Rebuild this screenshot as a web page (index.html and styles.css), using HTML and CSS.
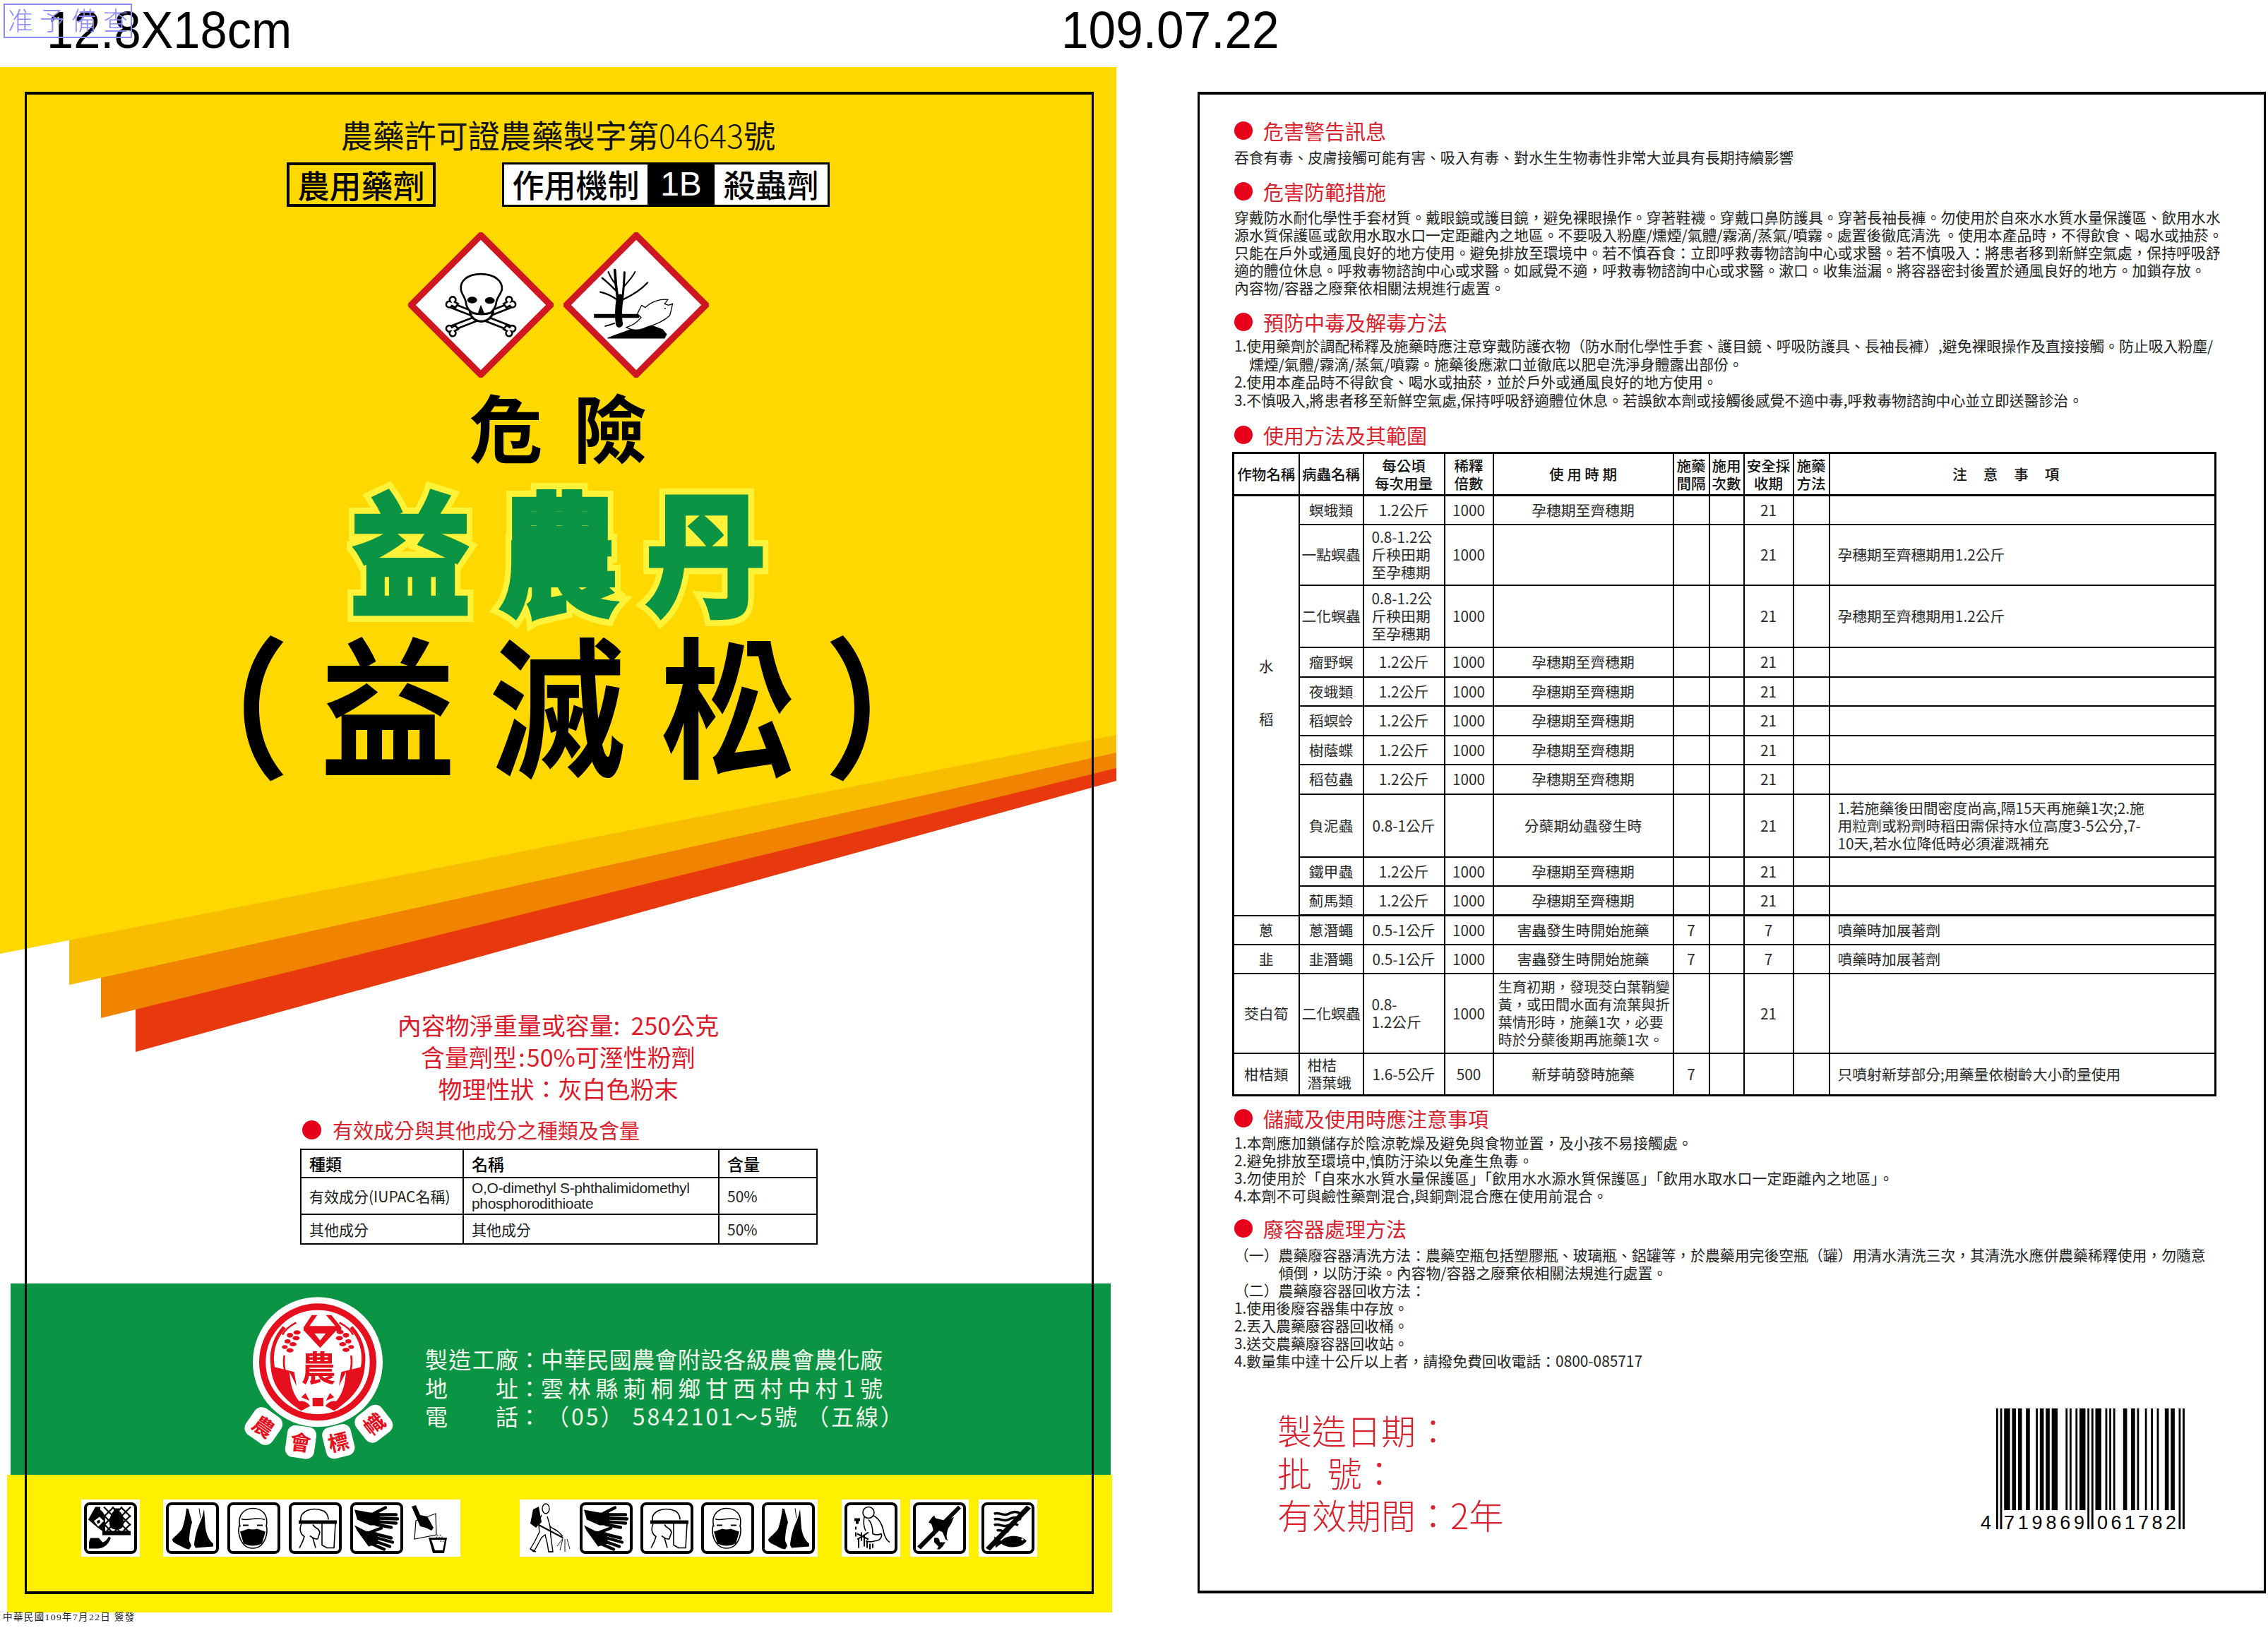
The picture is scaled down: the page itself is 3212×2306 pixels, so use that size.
FILE: index.html
```html
<!DOCTYPE html>
<html lang="zh-Hant">
<head>
<meta charset="utf-8">
<title>益農丹 標示</title>
<link rel="stylesheet" href="styles.css">
</head>
<body>
<svg class="defs" aria-hidden="true">
  <symbol id="i-boots" viewBox="0 0 67 64">
    <path d="M25 4C24 14 22 24 19 33C14 40 8 44 5 48C5 52 10 54 14 56C20 59 25 62 29 62L32 57L29 50C29 40 31 30 33 24C31 16 29 10 28 5Z"/>
    <path d="M48 14L50 5L52 32C54 44 58 50 63 54L63 58L38 60L36 56C37 44 40 34 43 27C45 22 47 18 48 14Z"/>
    <path d="M43 4L45 18" fill="none" stroke="#000" stroke-width="1"/>
  </symbol>
  <symbol id="i-mask" viewBox="0 0 67 64">
    <g fill="none" stroke="#000" stroke-width="1.6">
      <path d="M14 30C9 12 22 4 32 4C44 4 55 12 51 30"/>
      <path d="M13 28C10 38 14 50 20 56C26 62 38 62 44 56C50 50 54 38 51 28"/>
      <path d="M16 19C24 23 36 15 49 20"/>
    </g>
    <path d="M18 27h8v2h-8zM38 27h8v2h-8z"/>
    <path d="M14 37L26 33Q32 35 38 33L50 37L45 54Q32 60 19 54Z"/>
  </symbol>
  <symbol id="i-shield" viewBox="0 0 67 64">
    <g fill="none" stroke="#000" stroke-width="1.6">
      <path d="M13 22C11 7 30 1 46 8C50 11 52 15 52 20"/>
      <path d="M14 26C10 34 13 41 18 44C16 52 13 56 11 60"/>
      <path d="M43 25V56L50 60H60L62 25"/>
      <path d="M30 27C34 34 38 30 40 38L37 47C33 49 29 45 26 43"/>
      <path d="M30 46L34 60"/>
    </g>
    <path d="M10 21H64V26H10Z"/>
  </symbol>
  <symbol id="i-gloves" viewBox="0 0 67 64">
    <path d="M2 6L24 10L38 10L38 28L24 28L6 20Z"/>
    <path d="M2 28L18 36L34 38L36 54L22 58L6 36Z"/>
    <g fill="none" stroke="#000" stroke-width="4.4" stroke-linecap="round">
      <path d="M36 13L61 13M36 18L63 19M36 23L61 25M33 27L54 31M30 11L46 3"/>
      <path d="M34 41L54 46M34 46L56 52M32 51L52 58M28 55L44 62M24 38L40 32"/>
    </g>
  </symbol>
</svg>

<div class="page">
  <header class="topline">
    <div class="size-mark">12.8X18cm</div>
    <div class="date-mark">109.07.22</div>
  </header>
  <div class="stamp">准予備查</div>

  <div class="sheets">
    <section class="front">
      <svg class="front-bg" viewBox="0 0 1581 2189" aria-hidden="true">
        <polygon fill="#E8380D" points="192,1395 1581,1011 1581,800 192,800"/>
        <polygon fill="#F08300" points="143,1347 1581,993 1581,800 143,800"/>
        <polygon fill="#F8BC00" points="98,1300 1581,971 1581,800 98,800"/>
        <polygon fill="#FFD800" points="0,0 1581,0 1581,946 0,1256"/>
      </svg>
      <div class="front-main">
        <div class="permit">農藥許可證農藥製字第<span class="permit-no">04643</span>號</div>
        <div class="tags">
          <div class="tag-use">農用藥劑</div>
          <div class="tag-moa">
            <span class="moa-a">作用機制</span><span class="moa-b">1B</span><span class="moa-c">殺蟲劑</span>
          </div>
        </div>
        <div class="ghs">
          <svg class="ghs-icon" viewBox="57 57 620 620" aria-label="toxic">
            <polygon points="367,70 664,367 367,664 70,367" fill="#fff" stroke="#CF1722" stroke-width="28"/>
            <g stroke-linecap="round" fill="none">
              <path d="M245 370L490 465M490 370L245 465" stroke="#000" stroke-width="28"/>
              <path d="M245 370L490 465M490 370L245 465" stroke="#fff" stroke-width="12"/>
            </g>
            <g fill="#fff" stroke="#000" stroke-width="8">
              <path d="M236 352a13 13 0 1 1 20 2l14 8-12 16-14-8a13 13 0 1 1-8-18z"/>
              <path d="M498 352a13 13 0 1 0-20 2l-14 8 12 16 14-8a13 13 0 1 0 8-18z"/>
              <path d="M236 480a13 13 0 1 0 20-2l14-8-12-16-14 8a13 13 0 1 0-8 18z"/>
              <path d="M498 480a13 13 0 1 1-20-2l-14-8 12-16 14 8a13 13 0 1 1 8 18z"/>
              <path d="M367 235C310 235 278 265 282 300C283 320 302 335 304 360C306 385 325 395 335 410L400 410C412 395 430 385 432 360C434 335 453 320 457 300C460 265 425 235 367 235Z"/>
              <path d="M320 392C325 452 412 452 420 392C410 410 330 410 320 392Z" stroke-width="10"/>
            </g>
            <ellipse cx="330" cy="346" rx="21" ry="14"/>
            <ellipse cx="405" cy="348" rx="21" ry="14"/>
            <path d="M367 366L354 402H382Z"/>
          </svg>
          <svg class="ghs-icon" viewBox="717 57 620 620" aria-label="environment">
            <polygon points="1027,70 1324,367 1027,664 730,367" fill="#fff" stroke="#CF1722" stroke-width="28"/>
            <g fill="none" stroke="#000" stroke-linecap="round">
              <path d="M955 448C950 420 950 385 958 335" stroke-width="30"/>
              <path d="M948 340C942 300 938 260 936 218" stroke-width="11"/>
              <path d="M945 310C925 290 905 270 882 252" stroke-width="7"/>
              <path d="M908 226C918 250 930 268 940 280" stroke-width="6"/>
              <path d="M946 345C925 330 900 318 874 312" stroke-width="7"/>
              <path d="M968 345C972 310 976 270 977 228" stroke-width="9"/>
              <path d="M974 290C990 270 1010 250 1022 226" stroke-width="6"/>
              <path d="M968 345C1000 330 1045 305 1075 272" stroke-width="7"/>
              <path d="M935 445C920 450 905 455 895 457" stroke-width="6"/>
            </g>
            <path d="M847 405H1040V422H847Z"/>
            <path d="M905 506C950 490 1000 470 1030 460L1060 452L1100 456L1140 470L1158 492L1148 510H905Z"/>
            <path d="M1032 405L1050 368L1066 378C1090 352 1130 340 1162 344L1148 362L1165 368L1182 362C1178 380 1176 392 1170 412C1140 440 1095 455 1070 462C1040 478 1010 476 985 462C1010 455 1032 440 1048 420Z" fill="#fff" stroke="#000" stroke-width="4"/>
            <circle cx="1150" cy="382" r="3"/>
          </svg>
        </div>
        <div class="danger">危險</div>
        <div class="brand"><span class="brand-text" data-t="益農丹">益農丹</span></div>
        <div class="actives">
          <span>&#xFF08;</span><span>益</span><span>滅</span><span>松</span><span>&#xFF09;</span>
        </div>
        <div class="spec">
          <div>內容物淨重量或容量:&nbsp;&nbsp;250公克</div>
          <div>含量劑型&#8202;:&#8202;50%可溼性粉劑</div>
          <div>物理性狀&#xFF1A;灰白色粉末</div>
        </div>
        <div class="comp">
          <h3 class="comp-head"><span class="dot"></span>有效成分與其他成分之種類及含量</h3>
          <table class="comp-table">
            <colgroup><col class="cc1"><col class="cc2"><col class="cc3"></colgroup>
            <tr class="cr1"><th>種類</th><th>名稱</th><th>含量</th></tr>
            <tr class="cr2"><td>有效成分(IUPAC名稱)</td><td class="latin">O,O-dimethyl S-phthalimidomethyl<br>phosphorodithioate</td><td>50%</td></tr>
            <tr class="cr3"><td>其他成分</td><td>其他成分</td><td>50%</td></tr>
          </table>
        </div>
      </div>

      <div class="maker">
        <svg class="emblem" viewBox="0 0 840 780" role="img" aria-label="農會標幟">
          <circle cx="390" cy="328" r="276" fill="#fff"/>
          <circle cx="390" cy="328" r="235" fill="none" stroke="#E60F1E" stroke-width="28"/>
          <g fill="none" stroke="#E60F1E">
            <path d="M248 180A200 200 0 0 0 270 470" stroke-width="16"/>
            <path d="M532 180A200 200 0 0 1 510 470" stroke-width="16"/>
            <path d="M248 300A170 170 0 0 0 255 380" stroke-width="8"/>
            <path d="M532 300A170 170 0 0 1 525 380" stroke-width="8"/>
            <path d="M298 160C270 175 250 190 240 212M482 160C510 175 530 190 540 212" stroke-width="8"/>
          </g>
          <path fill="#E60F1E" d="M190 345C195 420 230 475 320 535L340 525C290 480 275 440 270 370L300 430L290 370Z"/>
          <path fill="#E60F1E" d="M590 345C585 420 550 475 460 535L440 525C490 480 505 440 510 370L480 430L490 370Z"/>
          <path fill="#E60F1E" d="M365 128H388L355 175H465L425 128H448L490 180V196H467L400 268L333 196H330V180Z"/>
          <path fill="#fff" d="M376 206H424L400 236Z"/>
          <g fill="#E60F1E">
            <ellipse cx="302" cy="202" rx="15" ry="9"/><ellipse cx="272" cy="214" rx="13" ry="10"/>
            <ellipse cx="298" cy="226" rx="15" ry="9"/><ellipse cx="262" cy="240" rx="13" ry="9"/>
            <ellipse cx="285" cy="252" rx="15" ry="9"/><ellipse cx="250" cy="264" rx="12" ry="8"/>
            <ellipse cx="272" cy="278" rx="15" ry="9"/>
            <ellipse cx="485" cy="200" rx="15" ry="9"/><ellipse cx="510" cy="214" rx="13" ry="10"/>
            <ellipse cx="482" cy="226" rx="15" ry="9"/><ellipse cx="520" cy="240" rx="13" ry="9"/>
            <ellipse cx="496" cy="252" rx="15" ry="9"/><ellipse cx="532" cy="264" rx="12" ry="8"/>
            <ellipse cx="510" cy="276" rx="15" ry="9"/>
            <path d="M368 480H414V516H368Z"/>
            <path d="M308 495C325 490 345 495 358 515C340 525 320 530 305 527Z"/>
            <path d="M472 495C455 490 435 495 422 515C440 525 460 530 475 527Z"/>
            <path d="M320 478L338 460L355 492Z"/><path d="M460 478L442 460L425 492Z"/>
          </g>
          <text class="emb-main" x="393" y="408">農</text>
          <g fill="#fff">
            <rect x="-68" y="-68" width="136" height="136" rx="36" transform="translate(160 600) rotate(35)"/>
            <rect x="-62" y="-68" width="124" height="136" rx="34" transform="translate(318 668) rotate(8)"/>
            <rect x="-62" y="-68" width="124" height="136" rx="34" transform="translate(478 665) rotate(-14)"/>
            <rect x="-68" y="-68" width="136" height="136" rx="36" transform="translate(628 590) rotate(-38)"/>
          </g>
          <g class="emb-small">
            <text transform="translate(140 630) rotate(35)">農</text>
            <text transform="translate(312 702) rotate(8)">會</text>
            <text transform="translate(486 700) rotate(-14)">標</text>
            <text transform="translate(650 618) rotate(-38)">幟</text>
          </g>
        </svg>
        <div class="address">
          <div class="addr-k">製造工廠</div><div class="addr-c">&#xFF1A;</div><div class="addr-v">中華民國農會附設各級農會農化廠</div>
          <div class="addr-k">地址</div><div class="addr-c">&#xFF1A;</div><div class="addr-v">雲林縣莿桐鄉甘西村中村1號</div>
          <div class="addr-k">電話</div><div class="addr-c">&#xFF1A;</div><div class="addr-v addr-tel">&#xFF08;05&#xFF09; 5842101&#xFF5E;5號 &#xFF08;五線&#xFF09;</div>
        </div>
      </div>

      <div class="pic-band">
        <div class="strip strip-a">
          <svg class="pic" viewBox="0 0 67 64">
            <g fill="none" stroke="#000" stroke-width="2.2">
              <path d="M24 2L60 38M36 2L62 28M48 2L62 16M24 14L48 38M24 26L36 38M62 2L28 36M50 2L24 28M38 2L24 16M62 14L38 38M62 26L50 38"/>
            </g>
            <path d="M12 2H19V6C24 10 26 14 26 20V36H62V42H22V36L16 32L2 20Z"/>
            <path d="M10 22L18 16L24 22L16 30Z" fill="#fff"/>
            <path d="M14 22L18 20L19 24L15 26Z"/>
            <path d="M38 4H46V8C51 12 52 18 52 24C52 30 50 34 42 34C34 34 32 30 32 24C32 18 34 12 38 8Z"/>
            <path d="M5 46H17L22 52C24 52 28 50 31 44L34 46C30 56 24 60 16 61H3V52Z"/>
          </svg>
        </div>
        <div class="strip strip-b">
          <svg class="pic"><use href="#i-boots"/></svg>
          <svg class="pic"><use href="#i-mask"/></svg>
          <svg class="pic"><use href="#i-shield"/></svg>
          <svg class="pic"><use href="#i-gloves"/></svg>
          <svg class="free-pour" viewBox="0 0 63 73">
            <path d="M8 26L36 16L37 46L6 52Z" fill="none" stroke="#000" stroke-width="1.2"/>
            <path d="M2 6L8 4L14 18L24 20L33 36L30 40L22 36L14 34Z"/>
            <path d="M34 46L44 56M38 46L47 56M42 46L50 56" stroke="#555" stroke-width="1.6" stroke-dasharray="2 2" fill="none"/>
            <path d="M26 56H52L48 78H32Z M30 59L35 74H46L49 59Z" fill-rule="evenodd" transform="translate(0 -6)"/>
          </svg>
        </div>
        <div class="strip strip-c">
          <svg class="free-spray" viewBox="0 0 65 73">
            <path d="M10 10L18 6L22 28L14 36L6 30Z"/>
            <g fill="none" stroke="#000" stroke-width="1.4">
              <ellipse cx="28" cy="9" rx="5" ry="7"/>
              <path d="M22 18C18 26 18 36 19 42L12 56L6 66L11 70L22 50L27 46L30 58L32 70L38 70L35 48L34 34C38 38 42 38 46 42L52 48"/>
              <path d="M30 20C32 26 33 30 34 34"/>
              <path d="M6 66L14 70M32 70H38"/>
              <path d="M18 32L52 50" stroke-width="2"/>
              <path d="M52 52L48 68M55 52L55 70M58 52L62 66M53 50L44 62" stroke-width=".9"/>
            </g>
          </svg>
          <svg class="pic"><use href="#i-gloves"/></svg>
          <svg class="pic"><use href="#i-shield"/></svg>
          <svg class="pic"><use href="#i-mask"/></svg>
          <svg class="pic"><use href="#i-boots"/></svg>
        </div>
        <div class="strip strip-d">
          <svg class="pic" viewBox="0 0 67 64">
            <g fill="none" stroke="#000" stroke-width="1.6">
              <ellipse cx="30" cy="10" rx="8" ry="8"/>
              <path d="M24 16C22 26 24 32 26 36M36 14C46 18 50 28 52 40C54 46 56 50 60 52"/>
              <path d="M30 20C34 24 36 30 36 40C40 42 44 42 48 40C50 44 46 50 40 50C34 52 30 52 26 50"/>
            </g>
            <path d="M10 18H18V22H16V26H12V22H10Z"/>
            <path d="M12 30V34M12 38V44M20 38V50M24 42V58M16 46V60M28 50V60M32 54V62M36 54V60M14 40L30 48M14 48L30 38" fill="none" stroke="#000" stroke-width="2"/>
          </svg>
        </div>
        <div class="strip strip-e">
          <svg class="pic" viewBox="0 0 67 64">
            <path d="M22 18L26 14L28 18L44 22L54 16L50 26L46 32C44 38 42 46 46 50L42 48L38 38L30 34L26 44L24 32L22 26L18 24Z"/>
            <path d="M26 46C32 44 34 48 34 52L42 52L38 58L34 62H30L32 58L26 52Z"/>
            <path d="M2 58L7 62L64 4L60 0Z"/>
          </svg>
        </div>
        <div class="strip strip-f">
          <svg class="pic" viewBox="0 0 67 64">
            <path d="M14 12C20 8 26 16 34 12S46 8 52 12M14 20C20 16 26 24 34 20S46 16 52 20M14 28C20 24 26 32 34 28S44 26 48 28M18 36C22 32 28 40 34 36" fill="none" stroke="#000" stroke-width="3.4"/>
            <path d="M14 44L24 50C30 42 50 40 60 50C54 60 34 62 24 54L16 60Z"/>
            <circle cx="54" cy="48" r="1.6" fill="#fff"/>
            <path d="M2 60L8 64L66 4L60 0Z"/>
          </svg>
        </div>
      </div>
      <div class="front-frame"></div>
    </section>

    <section class="back">
      <h3 class="sec"><span class="dot"></span>危害警告訊息</h3>
      <div class="txt txt-a">
        <div>吞食有毒、皮膚接觸可能有害、吸入有毒、對水生生物毒性非常大並具有長期持續影響</div>
      </div>
      <h3 class="sec sec-2"><span class="dot"></span>危害防範措施</h3>
      <div class="txt txt-b">
        <div>穿戴防水耐化學性手套材質。戴眼鏡或護目鏡&#xFF0C;避免裸眼操作。穿著鞋襪。穿戴口鼻防護具。穿著長袖長褲。勿使用於自來水水質水量保護區、飲用水水</div>
        <div>源水質保護區或飲用水取水口一定距離內之地區。不要吸入粉塵/燻煙/氣體/霧滴/蒸氣/噴霧。處置後徹底清洗 。使用本產品時&#xFF0C;不得飲食、喝水或抽菸。</div>
        <div>只能在戶外或通風良好的地方使用。避免排放至環境中。若不慎吞食&#xFF1A;立即呼救毒物諮詢中心或求醫。若不慎吸入&#xFF1A;將患者移到新鮮空氣處&#xFF0C;保持呼吸舒</div>
        <div>適的體位休息。呼救毒物諮詢中心或求醫。如感覺不適&#xFF0C;呼救毒物諮詢中心或求醫。漱口。收集溢漏。將容器密封後置於通風良好的地方。加鎖存放。</div>
        <div>內容物/容器之廢棄依相關法規進行處置。</div>
      </div>
      <h3 class="sec sec-3"><span class="dot"></span>預防中毒及解毒方法</h3>
      <div class="txt txt-c">
        <div>1.使用藥劑於調配稀釋及施藥時應注意穿戴防護衣物&#xFF08;防水耐化學性手套、護目鏡、呼吸防護具、長袖長褲&#xFF09;,避免裸眼操作及直接接觸。防止吸入粉塵/</div>
        <div class="ind">燻煙/氣體/霧滴/蒸氣/噴霧。施藥後應漱口並徹底以肥皂洗淨身體露出部份。</div>
        <div>2.使用本產品時不得飲食、喝水或抽菸&#xFF0C;並於戶外或通風良好的地方使用。</div>
        <div>3.不慎吸入,將患者移至新鮮空氣處,保持呼吸舒適體位休息。若誤飲本劑或接觸後感覺不適中毒,呼救毒物諮詢中心並立即送醫診治。</div>
      </div>
      <h3 class="sec sec-4"><span class="dot"></span>使用方法及其範圍</h3>

      <table class="usage">
        <colgroup>
          <col class="u1"><col class="u2"><col class="u3"><col class="u4"><col class="u5">
          <col class="u6"><col class="u7"><col class="u8"><col class="u9"><col class="u10">
        </colgroup>
        <tr class="h60 head"><th>作物名稱</th><th>病蟲名稱</th><th>每公頃<br>每次用量</th><th>稀釋<br>倍數</th><th>使 用 時 期</th><th>施藥<br>間隔</th><th>施用<br>次數</th><th>安全採<br>收期</th><th>施藥<br>方法</th><th class="wide">注&nbsp;&nbsp;&nbsp;&nbsp;&nbsp;意&nbsp;&nbsp;&nbsp;&nbsp;&nbsp;事&nbsp;&nbsp;&nbsp;&nbsp;&nbsp;項</th></tr>
        <tr class="h41"><td rowspan="11" class="crop-rice"><div>水</div><div>稻</div></td><td>螟蛾類</td><td>1.2公斤</td><td>1000</td><td>孕穗期至齊穗期</td><td></td><td></td><td>21</td><td></td><td></td></tr>
        <tr class="h86"><td>一點螟蟲</td><td class="lf">0.8-1.2公<br>斤秧田期<br>至孕穗期</td><td>1000</td><td></td><td></td><td></td><td>21</td><td></td><td class="lf">孕穗期至齊穗期用1.2公斤</td></tr>
        <tr class="h88"><td>二化螟蟲</td><td class="lf">0.8-1.2公<br>斤秧田期<br>至孕穗期</td><td>1000</td><td></td><td></td><td></td><td>21</td><td></td><td class="lf">孕穗期至齊穗期用1.2公斤</td></tr>
        <tr class="h42"><td>瘤野螟</td><td>1.2公斤</td><td>1000</td><td>孕穗期至齊穗期</td><td></td><td></td><td>21</td><td></td><td></td></tr>
        <tr class="h41"><td>夜蛾類</td><td>1.2公斤</td><td>1000</td><td>孕穗期至齊穗期</td><td></td><td></td><td>21</td><td></td><td></td></tr>
        <tr class="h42"><td>稻螟蛉</td><td>1.2公斤</td><td>1000</td><td>孕穗期至齊穗期</td><td></td><td></td><td>21</td><td></td><td></td></tr>
        <tr class="h41"><td>樹蔭蝶</td><td>1.2公斤</td><td>1000</td><td>孕穗期至齊穗期</td><td></td><td></td><td>21</td><td></td><td></td></tr>
        <tr class="h42"><td>稻苞蟲</td><td>1.2公斤</td><td>1000</td><td>孕穗期至齊穗期</td><td></td><td></td><td>21</td><td></td><td></td></tr>
        <tr class="h89"><td>負泥蟲</td><td>0.8-1公斤</td><td></td><td>分蘗期幼蟲發生時</td><td></td><td></td><td>21</td><td></td><td class="lf">1.若施藥後田間密度尚高,隔15天再施藥1次;2.施<br>用粒劑或粉劑時稻田需保持水位高度3-5公分,7-<br>10天,若水位降低時必須灌溉補充</td></tr>
        <tr class="h41"><td>鐵甲蟲</td><td>1.2公斤</td><td>1000</td><td>孕穗期至齊穗期</td><td></td><td></td><td>21</td><td></td><td></td></tr>
        <tr class="h42 thick"><td>薊馬類</td><td>1.2公斤</td><td>1000</td><td>孕穗期至齊穗期</td><td></td><td></td><td>21</td><td></td><td></td></tr>
        <tr class="h41"><td>蔥</td><td>蔥潛蠅</td><td>0.5-1公斤</td><td>1000</td><td>害蟲發生時開始施藥</td><td>7</td><td></td><td>7</td><td></td><td class="lf">噴藥時加展著劑</td></tr>
        <tr class="h41"><td>韭</td><td>韭潛蠅</td><td>0.5-1公斤</td><td>1000</td><td>害蟲發生時開始施藥</td><td>7</td><td></td><td>7</td><td></td><td class="lf">噴藥時加展著劑</td></tr>
        <tr class="h113"><td>茭白筍</td><td>二化螟蟲</td><td class="lf">0.8-<br>1.2公斤</td><td>1000</td><td class="lf tight">生育初期&#xFF0C;發現茭白葉鞘變<br>黃&#xFF0C;或田間水面有流葉與折<br>葉情形時&#xFF0C;施藥1次&#xFF0C;必要<br>時於分蘗後期再施藥1次。</td><td></td><td></td><td>21</td><td></td><td></td></tr>
        <tr class="h60"><td>柑桔類</td><td class="lf">柑桔<br>潛葉蛾</td><td>1.6-5公斤</td><td>500</td><td>新芽萌發時施藥</td><td>7</td><td></td><td></td><td></td><td class="lf">只噴射新芽部分;用藥量依樹齡大小酌量使用</td></tr>
      </table>

      <h3 class="sec sec-5"><span class="dot"></span>儲藏及使用時應注意事項</h3>
      <div class="txt txt-d">
        <div>1.本劑應加鎖儲存於陰涼乾燥及避免與食物並置&#xFF0C;及小孩不易接觸處。</div>
        <div>2.避免排放至環境中,慎防汙染以免產生魚毒。</div>
        <div>3.勿使用於「自來水水質水量保護區」「飲用水水源水質保護區」「飲用水取水口一定距離內之地區」。</div>
        <div>4.本劑不可與鹼性藥劑混合,與銅劑混合應在使用前混合。</div>
      </div>
      <h3 class="sec sec-6"><span class="dot"></span>廢容器處理方法</h3>
      <div class="txt txt-e">
        <div>&#xFF08;一&#xFF09;農藥廢容器清洗方法&#xFF1A;農藥空瓶包括塑膠瓶、玻璃瓶、鋁罐等&#xFF0C;於農藥用完後空瓶&#xFF08;罐&#xFF09;用清水清洗三次&#xFF0C;其清洗水應併農藥稀釋使用&#xFF0C;勿隨意</div>
        <div class="ind-b">傾倒&#xFF0C;以防汙染。內容物/容器之廢棄依相關法規進行處置。</div>
        <div>&#xFF08;二&#xFF09;農藥廢容器回收方法&#xFF1A;</div>
        <div>1.使用後廢容器集中存放。</div>
        <div>2.丟入農藥廢容器回收桶。</div>
        <div>3.送交農藥廢容器回收站。</div>
        <div>4.數量集中達十公斤以上者&#xFF0C;請撥免費回收電話&#xFF1A;0800-085717</div>
      </div>
      <div class="foot">
        <div class="lot">
          <div>製造日期&#xFF1A;</div>
          <div>批 &nbsp;號&#xFF1A;</div>
          <div>有效期間&#xFF1A;2年</div>
        </div>
        <svg class="barcode" viewBox="0 0 289 177" role="img" aria-label="4719869061782">
          <g transform="translate(22 0) scale(2.81 1)">
            <path d="M0 0h1v171h-1zM2 0h1v171h-1zM4 0h3v144h-3zM8 0h2v144h-2zM11 0h2v144h-2zM15 0h2v144h-2zM20 0h1v144h-1zM22 0h2v144h-2zM25 0h2v144h-2zM28 0h3v144h-3zM35 0h1v144h-1zM37 0h1v144h-1zM40 0h1v144h-1zM42 0h3v144h-3zM46 0h1v171h-1zM48 0h1v171h-1zM50 0h3v144h-3zM55 0h1v144h-1zM57 0h1v144h-1zM59 0h1v144h-1zM64 0h2v144h-2zM68 0h2v144h-2zM71 0h1v144h-1zM75 0h1v144h-1zM78 0h1v144h-1zM81 0h1v144h-1zM85 0h2v144h-2zM88 0h2v144h-2zM92 0h1v171h-1zM94 0h1v171h-1z"/>
          </g>
          <text class="bar-digits" x="0" y="171">4</text>
          <text class="bar-digits" x="33" y="171" textLength="114">719869</text>
          <text class="bar-digits" x="165" y="171" textLength="112">061782</text>
        </svg>
      </div>
    </section>
  </div>
  <div class="issued">中華民國109年7月22日 簽發</div>
</div>
</body>
</html>
```
FILE: styles.css
```css
* { box-sizing: border-box; }
html, body { margin: 0; padding: 0; background: #fff; }
body { font-family: "Noto Sans CJK TC", "Liberation Sans", sans-serif; color: #111; }
.defs { position: absolute; width: 0; height: 0; }
.page { position: relative; width: 3212px; height: 2306px; overflow: hidden; background: #fff; }

.topline { display: flex; height: 95px; font-family: "Liberation Sans", sans-serif; font-size: 75px; line-height: 84px; color: #000; }
.size-mark { margin-left: 66px; width: 1437px; transform: scaleX(.915); transform-origin: 0 0; white-space: nowrap; }
.date-mark { transform: scaleX(.925); transform-origin: 0 0; white-space: nowrap; }
.stamp { position: absolute; left: 5px; top: 5px; width: 182px; height: 49px; border: 2px solid #8C8CFF; color: #8C8CFF; font-size: 36px; line-height: 40px; letter-spacing: 9px; padding-left: 4px; font-weight: 300; white-space: nowrap; overflow: hidden; }

.sheets { display: flex; align-items: flex-start; }
.front { position: relative; width: 1581px; height: 2189px; flex: none; }
.front-bg { position: absolute; left: 0; top: 0; width: 1581px; height: 2189px; }
.front-frame { position: absolute; left: 35px; top: 35px; width: 1514px; height: 2128px; border: 3px solid #000; border-top-width: 4px; border-bottom-width: 4px; pointer-events: none; }
.front-main { position: relative; display: flex; flex-direction: column; align-items: center; height: 1723px; padding-top: 71px; }

.permit { height: 50px; line-height: 50px; font-size: 45px; color: #111; white-space: nowrap; font-weight: 400; }
.permit-no { font-weight: 300; }
.tags { display: flex; gap: 94px; margin-top: 14px; height: 63px; font-size: 45px; line-height: 55px; font-weight: 500; color: #000; }
.tag-use { width: 211px; border: 4px solid #000; text-align: center; white-space: nowrap; }
.tag-moa { display: flex; width: 464px; border: 3px solid #000; background: #fff; }
.moa-a { width: 203px; text-align: center; white-space: nowrap; }
.moa-b { width: 95px; background: #000; color: #fff; text-align: center; font-family: "Liberation Sans", sans-serif; font-size: 48px; }
.moa-c { flex: 1; text-align: center; white-space: nowrap; }

.ghs { display: flex; gap: 14px; margin-top: 36px; height: 206px; }
.ghs-icon { width: 206px; height: 206px; }

.danger { margin-top: 18px; height: 100px; line-height: 100px; font-size: 104px; font-weight: 700; letter-spacing: 44px; padding-left: 44px; color: #000; }
.brand { isolation: isolate; margin-top: 18px; height: 206px; line-height: 206px; font-size: 172px; font-weight: 900; letter-spacing: 37px; padding-left: 37px; color: #0B9444; transform: scaleY(1.1); }
.brand-text { position: relative; display: inline-block; -webkit-text-stroke: 4px #0B9444; }
.brand-text::before { content: attr(data-t); position: absolute; left: 0; top: 0; z-index: -1; -webkit-text-stroke: 20px #FFF33A; color: #FFF33A; }

.actives { display: flex; justify-content: center; height: 226px; margin-top: 1px; font-size: 192px; line-height: 226px; font-weight: 700; color: #000; transform: scaleY(1.12); }
.actives span { width: 241px; text-align: center; white-space: nowrap; }
.actives span:first-child { width: 145px; text-align: left; text-indent: -66px; }
.actives span:last-child { width: 145px; text-align: left; text-indent: 15px; }

.spec { margin-top: 325px; font-size: 34px; line-height: 45px; color: #DB1A2A; text-align: center; white-space: nowrap; }

.comp { margin-top: 22px; width: 731px; }
.comp-head { display: flex; align-items: center; margin: 0 0 12px 3px; height: 29px; font-size: 29px; line-height: 29px; font-weight: 400; color: #D8222E; white-space: nowrap; }
.dot { display: block; flex: none; width: 27px; height: 27px; border-radius: 50%; background: #E6001A; margin-right: 16px; }
.comp-table { width: 731px; table-layout: fixed; border-collapse: collapse; background: #fff; color: #222; font-size: 21px; line-height: 22px; }
.comp-table th, .comp-table td { border: 2px solid #000; padding: 0 11px; text-align: left; font-weight: 400; white-space: nowrap; }
.comp-table th { font-size: 23px; font-weight: 500; color: #000; }
.cc1 { width: 230px; } .cc2 { width: 362px; } .cc3 { width: 139px; }
.cr1 { height: 40px; } .cr2 { height: 52px; } .cr3 { height: 42px; }
.latin { font-family: "Liberation Sans", sans-serif; font-size: 21px; letter-spacing: -.35px; }

.maker { position: relative; display: flex; margin: 0 8px 0 15px; height: 271px; background: #0B9444; }
.emblem { flex: none; width: 280px; height: 260px; margin: 2px 0 0 305px; }
.emb-main { font-size: 148px; font-weight: 700; fill: #E60F1E; text-anchor: middle; }
.emb-small text { font-size: 88px; font-weight: 700; fill: #E60F1E; text-anchor: middle; }
.address { display: grid; grid-template-columns: 132px 32px 484px; grid-auto-rows: 40.5px; margin: 86px 0 0 2px; font-size: 32px; line-height: 40px; color: #F2F8EC; height: 122px; }
.addr-k, .addr-v { text-align: justify; text-align-last: justify; white-space: nowrap; }
.addr-c { text-align: center; }
.addr-tel { letter-spacing: 3px; padding-left: 8px; margin-right: -12px; }

.pic-band { position: relative; display: flex; align-items: flex-start; margin: 0 6px 0 10px; height: 195px; padding: 35px 0 0 105px; background: #FFF000; }
.strip { display: flex; gap: 12px; height: 81px; padding: 4px; background: #fff; flex: none; }
.strip-b { margin-left: 33px; width: 421px; }
.strip-c { margin-left: 84px; width: 422px; padding-left: 9px; gap: 11px; }
.strip-d { margin-left: 34px; }
.strip-e { margin-left: 14px; }
.strip-f { margin-left: 14px; }
.pic { display: block; width: 75px; height: 73px; padding: 0; border: 4px solid #000; border-radius: 8px; background: #fff; }
.free-pour { width: 63px; height: 73px; margin-left: -2px; }
.free-spray { width: 65px; height: 73px; flex: none; }

.back { width: 1513px; height: 2127px; margin: 35px 0 0 115px; padding: 38px 0 0 49px; border: 3px solid #000; border-top-width: 4px; border-bottom-width: 4px; flex: none; }
.sec { display: flex; align-items: center; margin: 0; height: 26px; font-size: 29px; line-height: 26px; font-weight: 400; color: #D8222E; white-space: nowrap; }
.sec .dot { width: 26px; height: 26px; margin-right: 15px; }
.sec-2 { margin-top: 23px; }
.sec-3 { margin-top: 23px; }
.sec-4 { margin-top: 24px; }
.sec-5 { margin-top: 18px; }
.sec-6 { margin-top: 21px; }

.txt { font-size: 20.85px; line-height: 25px; color: #222; white-space: nowrap; }
.txt-a { margin-top: 12px; }
.txt-b { margin-top: 11px; }
.txt-c { margin-top: 8px; line-height: 25.5px; }
.txt-d { margin-top: 9px; letter-spacing: .2px; }
.txt-e { margin-top: 12px; }
.ind { padding-left: 21px; }
.ind-b { padding-left: 63px; }

.usage { width: 1391px; margin: 11px 0 0 -3px; table-layout: fixed; border-collapse: collapse; font-size: 20.8px; line-height: 25px; color: #2A2A2A; border: 3px solid #000; }
.usage th, .usage td { border: 2px solid #000; padding: 0; text-align: center; font-weight: 400; white-space: nowrap; overflow: hidden; }
.usage th { color: #111; font-size: 20.5px; font-weight: 500; border-bottom-width: 3px; }
.usage th.wide { padding-right: 46px; }
.usage .lf { text-align: left; padding-left: 11px; }
.usage .tight { padding-left: 6px; font-size: 20.3px; }
.thick td { border-bottom-width: 3px; }
.crop-rice { padding-bottom: 36px !important; }
.crop-rice div + div { margin-top: 50px; }
.u1 { width: 93px; } .u2 { width: 91px; } .u3 { width: 115px; } .u4 { width: 69px; } .u5 { width: 255px; }
.u6 { width: 51px; } .u7 { width: 49px; } .u8 { width: 70px; } .u9 { width: 51px; } .u10 { width: 547px; }
.h41 { height: 41px; } .h42 { height: 42px; } .h60 { height: 60px; } .h86 { height: 86px; } .h88 { height: 88px; } .h89 { height: 89px; } .h113 { height: 113px; }

.foot { display: flex; justify-content: space-between; margin-top: 55px; padding-left: 61px; padding-right: 112px; }
.lot { font-size: 49px; line-height: 60px; color: #D8222E; white-space: nowrap; font-weight: 300; }
.barcode { width: 289px; height: 177px; }
.bar-digits { font-family: "Liberation Sans", sans-serif; font-size: 27px; fill: #000; }

.issued { position: absolute; left: 4px; top: 2283px; font-family: "Liberation Serif", "Noto Sans CJK TC", serif; font-size: 13.5px; line-height: 16px; letter-spacing: 1.4px; color: #222; white-space: nowrap; }
```
